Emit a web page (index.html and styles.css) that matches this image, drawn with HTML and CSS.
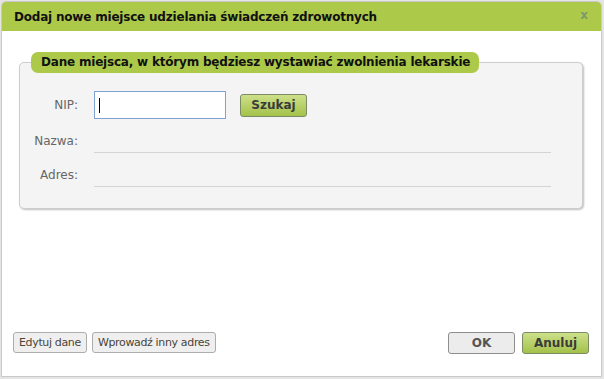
FILE: index.html
```html
<!DOCTYPE html>
<html lang="pl">
<head>
<meta charset="utf-8">
<title>Dodaj nowe miejsce</title>
<link rel="stylesheet" href="styles.css">
</head>
<body>
<div class="dialog">
  <div class="titlebar">
    <span class="title">Dodaj nowe miejsce udzielania świadczeń zdrowotnych</span>
    <span class="close">x</span>
  </div>
  <div class="content">
    <div class="group">
      <div class="legend">Dane miejsca, w którym będziesz wystawiać zwolnienia lekarskie</div>
      <div class="row row-nip">
        <label class="lbl">NIP:</label>
        <div class="input"><span class="caret"></span></div>
        <button class="btn btn-green btn-search">Szukaj</button>
      </div>
      <div class="row row-line">
        <label class="lbl">Nazwa:</label>
        <div class="value"></div>
      </div>
      <div class="row row-line">
        <label class="lbl">Adres:</label>
        <div class="value"></div>
      </div>
    </div>
  </div>
  <div class="footer">
    <div class="left">
      <button class="btn btn-small">Edytuj dane</button>
      <button class="btn btn-small">Wprowadź inny adres</button>
    </div>
    <div class="right">
      <button class="btn btn-big btn-grey">OK</button>
      <button class="btn btn-big btn-green">Anuluj</button>
    </div>
  </div>
</div>
</body>
</html>
```
FILE: styles.css
```css
html, body {
  margin: 0;
  padding: 0;
}
body {
  background: #e4e4e4;
  width: 604px;
  height: 379px;
  overflow: hidden;
  font-family: "DejaVu Sans", Verdana, sans-serif;
  font-size: 12px;
}
.dialog {
  box-sizing: border-box;
  margin: 1px 0 0 1px;
  width: 601px;
  height: 376px;
  background: #fff;
  border: 1px solid #c9c9c9;
  border-radius: 5px 5px 0 0;
  display: flex;
  flex-direction: column;
}
.titlebar {
  height: 29px;
  background: #adc94a;
  border-radius: 4px 4px 0 0;
  display: flex;
  align-items: center;
  justify-content: space-between;
  padding: 0 12px 0 12px;
}
.title {
  font-weight: bold;
  font-size: 12px;
  color: #111;
  letter-spacing: -0.2px;
  padding-top: 1px;
}
.close {
  color: #7d9a6a;
  font-weight: bold;
  font-size: 12px;
  margin-top: -4px;
  margin-right: 1px;
}
.content {
  padding: 31px 18px 0 17px;
  flex: 1;
}
.group {
  position: relative;
  box-sizing: border-box;
  width: 564px;
  height: 147px;
  background: #f4f4f4;
  border: 1px solid #cdcdcd;
  border-radius: 5px;
  box-shadow: 1px 1px 2px rgba(0,0,0,0.25);
  padding: 28px 0 0 0;
}
.legend {
  position: absolute;
  left: 11px;
  top: -11px;
  height: 21px;
  line-height: 21px;
  padding: 0 9px 0 10px;
  background: #adc94a;
  border-radius: 7px;
  font-weight: bold;
  font-size: 12px;
  color: #111;
  letter-spacing: -0.2px;
}
.row {
  display: flex;
  align-items: center;
}
.lbl {
  width: 58px;
  text-align: right;
  color: #666;
  font-size: 12px;
}
.input {
  box-sizing: border-box;
  margin-left: 16px;
  width: 132px;
  height: 28px;
  background: #fff;
  border: 1px solid #7ea3d1;
  display: flex;
  align-items: center;
  padding-left: 4px;
}
.caret {
  width: 1px;
  height: 15px;
  background: #000;
}
.btn {
  font-family: "DejaVu Sans", Verdana, sans-serif;
  box-sizing: border-box;
  cursor: pointer;
  padding: 0;
}
.btn-search {
  margin-left: 14px;
  width: 67px;
  height: 23px;
  border-radius: 3px;
  font-weight: bold;
  font-size: 12px;
}
.btn-green {
  background: linear-gradient(#cde08a, #a3c24a);
  border: 1px solid #7d8a66;
  color: #3b3b3b;
}
.row-line {
  margin-top: 8px;
  height: 26px;
  align-items: flex-start;
}
.row-line .lbl {
  padding-top: 7px;
}
.value {
  margin-left: 16px;
  width: 457px;
  height: 25px;
  border-bottom: 1px solid #d4d4d4;
}
.footer {
  display: flex;
  justify-content: space-between;
  align-items: flex-end;
  padding: 0 12px 22px 11px;
}
.left {
  display: flex;
  gap: 5px;
  margin-bottom: 1px;
}
.btn-small {
  height: 21px;
  padding: 0 5px;
  background: #efefef;
  border: 1px solid #adadad;
  border-radius: 3px;
  color: #4a4437;
  font-size: 11px;
  letter-spacing: -0.35px;
}
.right {
  display: flex;
  gap: 7px;
}
.btn-big {
  width: 67px;
  height: 22px;
  border-radius: 3px;
  font-weight: bold;
  font-size: 12px;
}
.btn-grey {
  background: #ececec;
  border: 1px solid #8e8e8e;
  color: #555;
}
```
